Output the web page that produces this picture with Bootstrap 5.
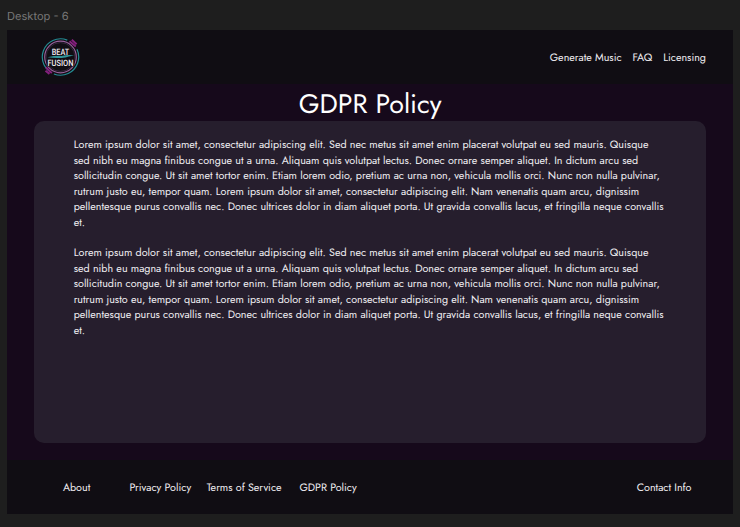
<!DOCTYPE html>
<html lang="en">
<head>
<meta charset="utf-8">
<meta name="viewport" content="width=device-width, initial-scale=1">
<title>GDPR Policy</title>
<link href="https://cdn.jsdelivr.net/npm/bootstrap@5.3.0/dist/css/bootstrap.min.css" rel="stylesheet">
<style>
body{background:#1e1e1e;font-family:Jost,Lato,sans-serif;font-size:10.75px;line-height:15.45px;color:#f0eef2;height:527px;overflow:hidden;text-rendering:geometricPrecision}
.frame-label{font:11.1px/16px Inter,sans-serif;color:#777;height:30px;padding:8px 0 0 7px}
.artboard{width:725.6px;height:484px;margin-left:7.4px;background:#16091b}
.topbar,.bottombar{height:54px;background:#100d13}
.topbar{padding:3px 27px 0 33px}
.artboard a{color:inherit;white-space:nowrap}
.logo{width:40px;height:40px;margin:-3px 0 0 -.7px}
.page-title{font-size:26.8px;line-height:37px;padding-top:2px;height:37px;font-weight:400;color:#fff;white-space:nowrap}
.content{height:376px}
.policy{width:672px;height:322.4px;background:#261e2d;border-radius:10px;padding:17.3px 39.5px}
.policy p{margin:0 0 15.45px}
.policy p span{display:block;white-space:nowrap}
.bottombar{padding:3px 41.5px 0 55.5px}
.top-links{gap:10.8px}
.w-about{width:66.5px}.w-priv{width:77.3px}.w-terms{width:92.7px}
</style>
<script src="https://cdn.jsdelivr.net/npm/bootstrap@5.3.0/dist/js/bootstrap.bundle.min.js"></script>
</head>
<body>
<div class="frame-label">Desktop - 6</div>
<div class="artboard d-flex flex-column">
  <header class="topbar d-flex align-items-center justify-content-between">
    <svg class="logo" viewBox="0 0 40 40" fill="none" role="img" aria-label="Beat Fusion">
      <circle cx="20.500" cy="20" r="18.2" stroke="#248c94" stroke-width="1.2" stroke-dasharray="43 6 51 14.4" transform="rotate(-25 20.5 20)"/>
      <circle cx="20.500" cy="20" r="15.8" stroke="#96609a" stroke-width="1.2"/>
      <circle cx="20.500" cy="20" r="14.4" stroke="#40304b" stroke-width=".7"/>
      <path d="M29.500 4.200l6.300 5.200M31.800 2.800l4.800 4.400" stroke="#86207f" stroke-width="2"/>
      <path d="M5.800 30.300l6 5.800M5.500 33.700l4 3.200" stroke="#86207f" stroke-width="2"/>
      <rect x="6.500" y="21.500" width="28" height="8" fill="#100d13"/>
      <path d="M7.500 20.200q8-1.700 14-1.300 7-1.600 12.500-.5-6 1-8.500 2-9 1.200-18-.2z" fill="#32969a"/>
      <g fill="#f4edf5" font-family="Roboto,sans-serif" font-weight="500" font-size="8.800" text-anchor="middle">
        <text x="20.500" y="17.500" textLength="17.500" lengthAdjust="spacingAndGlyphs">BEAT</text>
        <text x="20.500" y="28.900" textLength="26" lengthAdjust="spacingAndGlyphs">FUSION</text>
      </g>
    </svg>
    <nav class="top-links nav flex-nowrap">
      <a class="text-decoration-none" href="#">Generate Music</a>
      <a class="text-decoration-none" href="#">FAQ</a>
      <a class="text-decoration-none" href="#">Licensing</a>
    </nav>
  </header>
  <main class="content d-flex flex-column align-items-center">
    <h1 class="page-title mb-0">GDPR Policy</h1>
    <section class="policy">
      <p>
        <span>Lorem ipsum dolor sit amet, consectetur adipiscing elit. Sed nec metus sit amet enim placerat volutpat eu sed mauris. Quisque</span>
        <span>sed nibh eu magna finibus congue ut a urna. Aliquam quis volutpat lectus. Donec ornare semper aliquet. In dictum arcu sed</span>
        <span>sollicitudin congue. Ut sit amet tortor enim. Etiam lorem odio, pretium ac urna non, vehicula mollis orci. Nunc non nulla pulvinar,</span>
        <span>rutrum justo eu, tempor quam. Lorem ipsum dolor sit amet, consectetur adipiscing elit. Nam venenatis quam arcu, dignissim</span>
        <span>pellentesque purus convallis nec. Donec ultrices dolor in diam aliquet porta. Ut gravida convallis lacus, et fringilla neque convallis</span>
        <span>et.</span>
      </p>
      <p>
        <span>Lorem ipsum dolor sit amet, consectetur adipiscing elit. Sed nec metus sit amet enim placerat volutpat eu sed mauris. Quisque</span>
        <span>sed nibh eu magna finibus congue ut a urna. Aliquam quis volutpat lectus. Donec ornare semper aliquet. In dictum arcu sed</span>
        <span>sollicitudin congue. Ut sit amet tortor enim. Etiam lorem odio, pretium ac urna non, vehicula mollis orci. Nunc non nulla pulvinar,</span>
        <span>rutrum justo eu, tempor quam. Lorem ipsum dolor sit amet, consectetur adipiscing elit. Nam venenatis quam arcu, dignissim</span>
        <span>pellentesque purus convallis nec. Donec ultrices dolor in diam aliquet porta. Ut gravida convallis lacus, et fringilla neque convallis</span>
        <span>et.</span>
      </p>
    </section>
  </main>
  <footer class="bottombar d-flex align-items-center">
    <a class="w-about text-decoration-none" href="#">About</a>
    <a class="w-priv text-decoration-none" href="#">Privacy Policy</a>
    <a class="w-terms text-decoration-none" href="#">Terms of Service</a>
    <a class="text-decoration-none" href="#">GDPR Policy</a>
    <a class="text-decoration-none ms-auto" href="#">Contact Info</a>
  </footer>
</div>
</body>
</html>
